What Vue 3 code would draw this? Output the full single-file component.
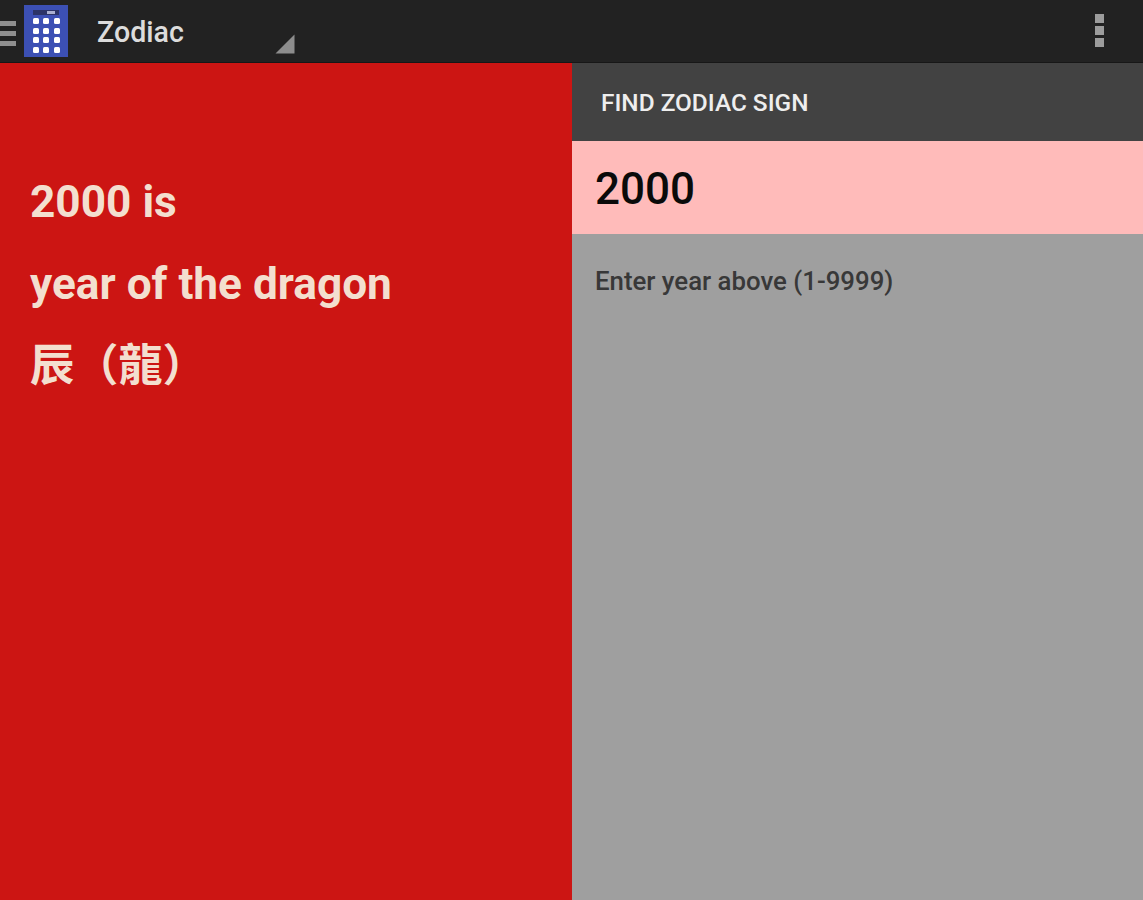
<script setup>
const lines = ['2000 is', 'year of the dragon', '辰（龍）']
const keys = Array.from({ length: 12 })
</script>

<template>
  <div class="app">
    <header class="bar">
      <div class="menu"><i></i><i></i><i></i></div>
      <div class="logo">
        <div class="screen"><span></span></div>
        <div class="keys"><b v-for="(k, i) in keys" :key="i"></b></div>
      </div>
      <div class="spinner">
        <span class="title">Zodiac</span>
        <svg class="corner" width="20" height="20" viewBox="0 0 20 20"><path d="M19.500 0.500V19.500H0.500Z" fill="#8d8d8d"/></svg>
      </div>
      <div class="more"><i></i><i></i><i></i></div>
    </header>
    <main class="body">
      <section class="left">
        <p v-for="l in lines" :key="l">{{ l }}</p>
      </section>
      <section class="right">
        <div class="head">FIND ZODIAC SIGN</div>
        <div class="input">2000</div>
        <div class="hint">Enter year above (1-9999)</div>
      </section>
    </main>
  </div>
</template>

<style>
html, body { margin: 0; background: #9f9f9f; }
</style>

<style scoped>
.app { width: 1143px; height: 900px; display: flex; flex-direction: column; overflow: hidden; font-family: Roboto, "Noto Sans CJK TC", sans-serif; }
.bar { height: 63px; flex: none; background: #222222; display: flex; align-items: center; box-sizing: border-box; border-bottom: 1px solid #171717; }
.menu { width: 16px; margin-top: 5px; display: flex; flex-direction: column; gap: 5px; flex: none; }
.menu i { display: block; height: 5px; background: #8f8f8f; }
.logo { width: 44px; height: 52px; margin-left: 8px; background: #3c50b4; flex: none; display: flex; flex-direction: column; align-items: center; padding-top: 5px; box-sizing: border-box; }
.screen { width: 26px; height: 5px; background: #2c3468; display: flex; justify-content: flex-end; padding: 1px 4px 1px 0; box-sizing: border-box; }
.screen span { width: 8px; background: #aab0d0; }
.keys { display: grid; grid-template-columns: repeat(3, 6px); gap: 3.500px 4.500px; margin-top: 3px; }
.keys b { display: block; width: 6px; height: 6px; background: #fff; border-radius: 1.500px; }
.spinner { width: 227px; height: 54px; flex: none; display: flex; align-items: center; position: relative; padding-left: 29px; padding-top: 2px; box-sizing: border-box; }
.title { color: #dcdcdc; font-size: 28.6px; font-weight: 500; }
.corner { position: absolute; right: 0; bottom: 4px; }
.more { margin-left: auto; margin-right: 39px; margin-top: -1px; display: flex; flex-direction: column; gap: 2.500px; }
.more i { display: block; width: 9px; height: 9.500px; background: #9c9c9c; }
.body { flex: 1; display: flex; min-height: 0; }
.left { width: 572px; flex: none; background: #cc1513; padding: 98px 30px 0; box-sizing: border-box; }
.left p { margin: 0; height: 82px; line-height: 82px; font-size: 44.2px; font-weight: 700; color: #f3dfcf; white-space: nowrap; }
.right { flex: 1; background: #9f9f9f; display: flex; flex-direction: column; }
.head { height: 78px; background: #424242; color: #eeeeee; font-size: 24.4px; font-weight: 500; display: flex; align-items: center; padding-left: 29px; box-sizing: border-box; }
.input { height: 93px; background: #ffbbba; color: #0a0a0a; font-size: 44px; font-weight: 500; display: flex; align-items: center; padding-left: 23px; padding-top: 3px; box-sizing: border-box; }
.hint { padding: 30px 0 0 23px; font-size: 25.8px; font-weight: 500; line-height: 34px; color: #383838; }
</style>
